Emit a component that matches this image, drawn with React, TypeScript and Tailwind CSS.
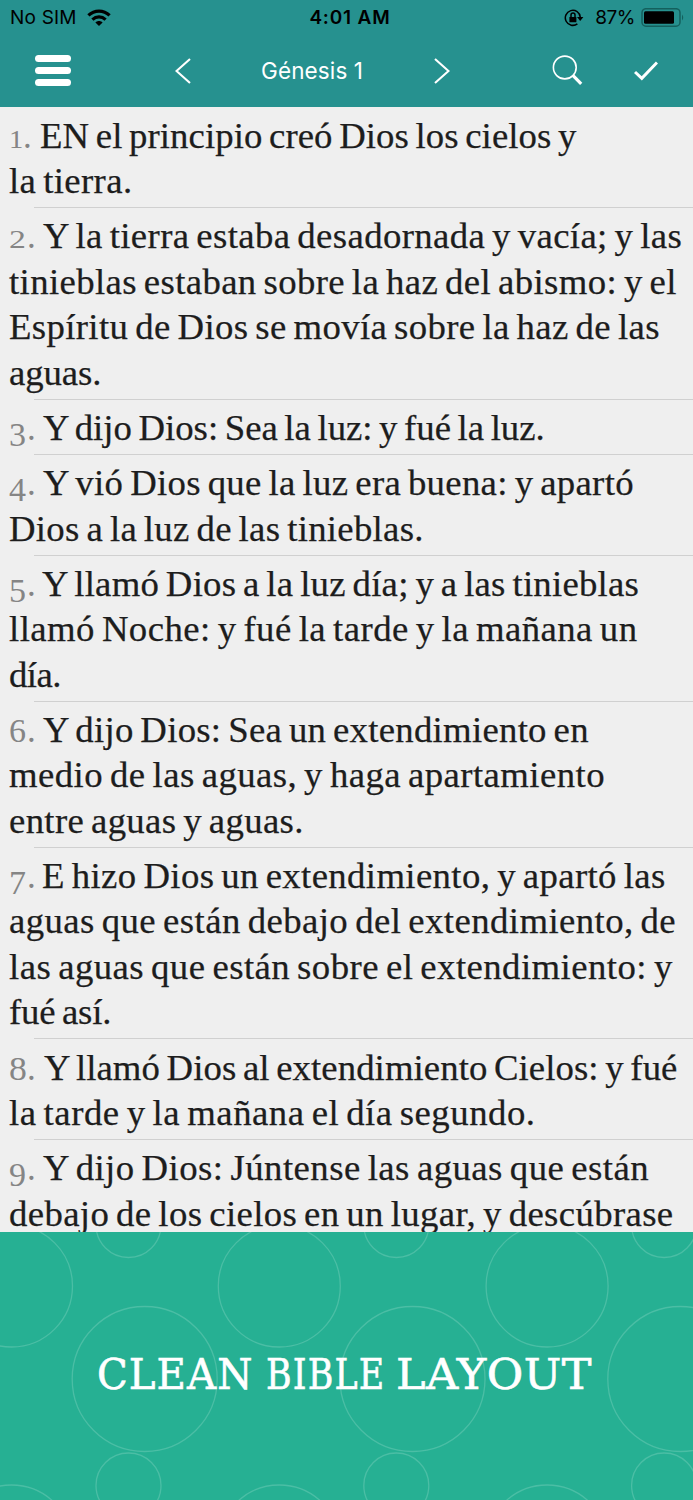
import { useLayoutEffect, useRef } from "react";

type FitProps = { text: string; width: number; stretch?: number; className?: string };

function Fit({ text, width, stretch = 1, className = "" }: FitProps) {
  const ref = useRef<HTMLSpanElement>(null);
  useLayoutEffect(() => {
    const el = ref.current;
    if (!el) return;
    el.style.letterSpacing = "0px";
    const natural = el.offsetWidth;
    el.style.letterSpacing = `${(width / stretch - natural) / (text.length - 1)}px`;
    el.style.transform = stretch === 1 ? "" : `scaleX(${stretch})`;
  }, [text, width, stretch]);
  return (
    <span ref={ref} className={`inline-block origin-left whitespace-pre ${className}`}>
      {text}
    </span>
  );
}

type Line = [string, number];
const verses: { start: number; lines: Line[] }[] = [
  { start: 40, lines: [["EN el principio creó Dios los cielos y", 576], ["la tierra.", 132]] },
  {
    start: 43,
    lines: [
      ["Y la tierra estaba desadornada y vacía; y las", 682],
      ["tinieblas estaban sobre la haz del abismo: y el", 677],
      ["Espíritu de Dios se movía sobre la haz de las", 659],
      ["aguas.", 101],
    ],
  },
  { start: 43, lines: [["Y dijo Dios: Sea la luz: y fué la luz.", 545]] },
  { start: 43, lines: [["Y vió Dios que la luz era buena: y apartó", 634], ["Dios a la luz de las tinieblas.", 423]] },
  {
    start: 42,
    lines: [["Y llamó Dios a la luz día; y a las tinieblas", 639], ["llamó Noche: y fué la tarde y la mañana un", 637], ["día.", 62]],
  },
  {
    start: 43,
    lines: [["Y dijo Dios: Sea un extendimiento en", 589], ["medio de las aguas, y haga apartamiento", 605], ["entre aguas y aguas.", 303]],
  },
  {
    start: 42,
    lines: [
      ["E hizo Dios un extendimiento, y apartó las", 665],
      ["aguas que están debajo del extendimiento, de", 676],
      ["las aguas que están sobre el extendimiento: y", 672],
      ["fué así.", 112],
    ],
  },
  { start: 44, lines: [["Y llamó Dios al extendimiento Cielos: y fué", 677], ["la tarde y la mañana el día segundo.", 535]] },
  { start: 43, lines: [["Y dijo Dios: Júntense las aguas que están", 649], ["debajo de los cielos en un lugar, y descúbrase", 673]] },
];

const digitStyle = [
  "text-[26px] scale-x-110",
  "text-[26px] scale-x-130",
  "text-[34px] translate-y-[5.5px]",
  "text-[34px] translate-y-[5.5px]",
  "text-[34px] translate-y-[5.5px]",
  "text-[34px]",
  "text-[34px] translate-y-[5.5px]",
  "text-[34px] scale-x-105",
  "text-[34px] translate-y-[5.5px]",
];

function StatusBar() {
  return (
    <div className="grid h-[35px] grid-cols-3 items-center text-[19px] text-black">
      <div className="flex items-center pl-[10px]">
        <Fit text="No SIM" width={67} className="translate-y-[1px]" />
        <svg className="ml-[10px]" width="24" height="18" viewBox="0 0 24 18" fill="none" stroke="#000" strokeWidth="3.2">
          <path d="M1.4 6.4C7.4 .6 16.6 .6 22.6 6.4" />
          <path d="M5.4 10.6c3.8-3.6 9.4-3.6 13.2 0" />
          <path d="M8.4 13.4c2-2 5.2-2 7.2 0L12 17z" fill="#000" stroke="none" />
        </svg>
      </div>
      <div className="pl-[7px] text-center font-semibold">
        <Fit text="4:01 AM" width={80} className="translate-y-[1px]" />
      </div>
      <div className="flex items-center justify-end pr-[8px]">
        <svg width="20" height="18" viewBox="0 0 20 18" fill="none" stroke="#000" strokeWidth="1.5">
          <path d="M16.3 8.2A7.5 7.5 0 1 0 13.4 14.8" />
          <path d="M13 8h6.4l-3.2 4z" fill="#000" stroke="none" />
          <rect x="5.4" y="8" width="7" height="5.2" rx=".5" fill="#000" stroke="none" />
          <path d="M7 8V6a2 2 0 0 1 4 0v2" />
        </svg>
        <Fit text="87%" width={40} className="ml-[11px] translate-y-[1px]" />
        <svg className="ml-[6px]" width="44" height="20" viewBox="0 0 44 20">
          <rect x="1" y=".7" width="38" height="17.5" rx="4" fill="none" stroke="#14605d" strokeWidth="1.5" />
          <rect x="3" y="3.2" width="30" height="12.6" rx="1.5" />
          <path d="M41 6.5q2.4 2.9 0 6z" fill="#14605d" />
        </svg>
      </div>
    </div>
  );
}

export default function App() {
  return (
    <div className="flex h-[1500px] w-[693px] flex-col overflow-hidden bg-[#efefef]">
      <header className="h-[107px] shrink-0 bg-[#26918f] [font-family:Inter,sans-serif]">
        <StatusBar />
        <nav className="flex h-[71px] items-center pl-[35px] text-white">
          <button className="flex w-[36px] flex-col gap-[5.5px]">
            <span className="h-[6.5px] rounded-full bg-white" />
            <span className="h-[6.5px] rounded-full bg-white" />
            <span className="h-[6.5px] rounded-full bg-white" />
          </button>
          <svg className="ml-[104px]" width="16" height="26" viewBox="0 0 16 26" fill="none" stroke="#fff" strokeWidth="2.1">
            <path d="M15 1 1.5 13 15 25" />
          </svg>
          <span className="ml-[70px] w-[104px] text-[22.5px]">
            <Fit text="Génesis 1" width={102} />
          </span>
          <svg className="ml-[69px]" width="16" height="26" viewBox="0 0 16 26" fill="none" stroke="#fff" strokeWidth="2.1">
            <path d="M1 1 14.5 13 1 25" />
          </svg>
          <svg className="ml-[102px]" width="31" height="31" viewBox="0 0 31 31" fill="none" stroke="#fff">
            <circle cx="12.8" cy="12.5" r="11.4" strokeWidth="1.6" />
            <path d="m20.6 20.2 8.6 8.6" strokeWidth="3.2" />
          </svg>
          <svg className="ml-[51px]" width="24" height="20" viewBox="0 0 24 20" fill="none" stroke="#fff" strokeWidth="3">
            <path d="m1 11 6.8 6.3L23 1.5" />
          </svg>
        </nav>
      </header>
      <main className="h-[1125px] shrink-0 overflow-hidden pt-[0.5px] text-[35px] leading-[45.5px] text-[#1d1d1d] [font-family:'Liberation_Serif',serif]">
        {verses.map((v, i) => (
          <section key={i}>
            <div className="pt-[6.2px] pb-[2.45px] pl-[9px]">
              {v.lines.map(([text, end], j) => (
                <div key={j} className="flex h-[45.5px] items-baseline">
                  {j === 0 && (
                    <span className="flex shrink-0 items-baseline text-[#858585]" style={{ width: v.start - 9 }}>
                      <span className={`inline-block origin-left ${digitStyle[i]}`}>{i + 1}</span>
                      <span className={i === 1 ? "ml-[5px]" : "ml-[1px]"}>.</span>
                    </span>
                  )}
                  <Fit
                    text={text}
                    width={end - (j === 0 ? v.start : 9)}
                    stretch={1.05}
                    className="[-webkit-text-stroke:0.25px_#1d1d1d] [word-spacing:-2.5px]"
                  />
                </div>
              ))}
            </div>
            <div className="ml-[34px] h-px bg-[#d0d0d0]" />
          </section>
        ))}
      </main>
      <footer className="relative h-[268px] shrink-0 overflow-hidden bg-[#26b093]">
        <svg className="absolute inset-0" width="693" height="268" fill="none" stroke="#4bbea5" strokeWidth="1.3">
          {[0, 1, 2].map((n) => (
            <g key={n} transform={`translate(${n * 267.8} 0)`}>
              <circle cx="11.5" cy="54" r="61" />
              <circle cx="128.5" cy="-7" r="32.5" />
              <circle cx="144.7" cy="147" r="72.5" />
              <circle cx="128.5" cy="253.5" r="32.5" />
              <circle cx="11.5" cy="314" r="61" />
            </g>
          ))}
        </svg>
        <h1 className="relative flex h-full items-center pt-[17px] text-[43px] text-white [-webkit-text-stroke:0.6px_#ffffff] [font-family:'DejaVu_Serif_Condensed','DejaVu_Serif',serif]">
          <span className="ml-[97px] w-[169px]">
            <Fit text="CLEAN" width={155} stretch={1.04} />
          </span>
          <span className="w-[130px]">
            <Fit text="BIBLE" width={118} stretch={0.9} />
          </span>
          <span>
            <Fit text="LAYOUT" width={196} stretch={1.15} />
          </span>
        </h1>
      </footer>
    </div>
  );
}
